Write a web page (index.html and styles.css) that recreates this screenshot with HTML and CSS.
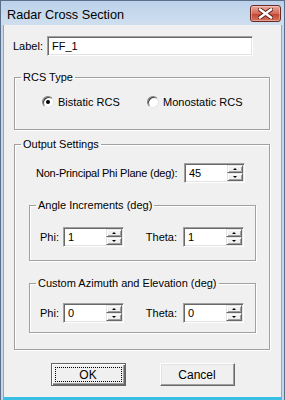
FILE: index.html
```html
<!DOCTYPE html>
<html>
<head>
  <meta charset="UTF-8">
  <title>Radar Cross Section</title>
  <link rel="stylesheet" href="styles.css">
</head>
<body>
  <div class="window">
    <div class="titlebar">
      <span class="title">Radar Cross Section</span>
      <div class="close-btn">
        <svg width="15" height="11" viewBox="0 0 15 11">
          <path d="M2 1.5 L13 9.5 M13 1.5 L2 9.5" stroke="#5c2018" stroke-width="4.2" stroke-linecap="square" fill="none"/>
          <path d="M2 1.5 L13 9.5 M13 1.5 L2 9.5" stroke="#ffffff" stroke-width="2.4" stroke-linecap="square" fill="none"/>
        </svg>
      </div>
    </div>

    <div class="client">
      <div class="label-row">
        <span>Label:</span>
        <div class="textbox">FF_1</div>
      </div>

      <fieldset class="group rcs">
        <legend>RCS Type</legend>
        <div class="radios">
          <div class="radio"><span class="radio-dot checked"></span>Bistatic RCS</div>
          <div class="radio"><span class="radio-dot"></span>Monostatic RCS</div>
        </div>
      </fieldset>

      <fieldset class="group output">
        <legend>Output Settings</legend>
        <div class="field-row">
          <span class="field-label">Non-Principal Phi Plane (deg):</span>
          <div class="spinner">
            <div class="spin-value">45</div>
            <div class="spin-btns"><div class="spin-up"></div><div class="spin-down"></div></div>
          </div>
        </div>

        <fieldset class="group inner angle">
          <legend>Angle Increments (deg)</legend>
          <div class="pair-row">
            <span class="pair-label">Phi:</span>
            <div class="spinner">
              <div class="spin-value">1</div>
              <div class="spin-btns"><div class="spin-up"></div><div class="spin-down"></div></div>
            </div>
            <span class="pair-label">Theta:</span>
            <div class="spinner">
              <div class="spin-value">1</div>
              <div class="spin-btns"><div class="spin-up"></div><div class="spin-down"></div></div>
            </div>
          </div>
        </fieldset>

        <fieldset class="group inner custom">
          <legend>Custom Azimuth and Elevation (deg)</legend>
          <div class="pair-row">
            <span class="pair-label">Phi:</span>
            <div class="spinner">
              <div class="spin-value">0</div>
              <div class="spin-btns"><div class="spin-up"></div><div class="spin-down"></div></div>
            </div>
            <span class="pair-label">Theta:</span>
            <div class="spinner">
              <div class="spin-value">0</div>
              <div class="spin-btns"><div class="spin-up"></div><div class="spin-down"></div></div>
            </div>
          </div>
        </fieldset>
      </fieldset>

      <div class="buttons">
        <div class="btn btn-default"><span class="focus">OK</span></div>
        <div class="btn">Cancel</div>
      </div>
    </div>
  </div>
</body>
</html>
```

FILE: styles.css
```css
body{margin:0;background:#ffffff;font-family:"Liberation Sans",Arial,sans-serif;font-size:11px;color:#000;}

.window{
  width:285px;
  height:400px;
  box-sizing:border-box;
  background:#c3d6ec;
  border:1px solid #5b6f88;
  border-bottom:none;
  display:flex;
  flex-direction:column;
}

.titlebar{
  height:24px;
  display:flex;
  align-items:center;
  justify-content:space-between;
  padding:0 3px 0 6px;
  background:linear-gradient(#bcd2ea, #cfdfef);
}
.title{font-size:12.7px;color:#000;margin-top:3px;}
.close-btn{
  width:29px;
  height:15px;
  align-self:flex-start;
  margin-top:4px;
  border:1px solid #6b2a22;
  border-radius:3px;
  background:linear-gradient(#e9a99c, #d46a58 50%, #c44636 55%, #d7735a);
  display:flex;
  align-items:center;
  justify-content:center;
  box-shadow:inset 0 0 0 1px rgba(255,255,255,0.35);
}

.client{
  flex:1;
  margin:0 2px 0 2px;
  background:#f0f0f0;
  border-left:1px solid #8ea6c2;
  border-right:1px solid #8ea6c2;
  border-bottom:3px solid #38bfe3;
}

.label-row{display:flex;align-items:center;gap:4px;margin:11px 0 0 9px;}
.textbox{
  width:206px;
  height:20px;
  box-sizing:border-box;
  background:#fff;
  border:1px solid;
  border-color:#a0a0a0 #ffffff #ffffff #a0a0a0;
  box-shadow:inset 1px 1px 0 #696969, inset -1px -1px 0 #e3e3e3;
  padding:0 0 0 4px;
  line-height:18px;
}

.group{
  margin:0 11px 0 10px;
  padding:0;
  border:1px solid #a0a0a0;
  box-shadow:1px 1px 0 #fff, inset 1px 1px 0 #fff;
  min-width:0;
}
.group legend{padding:0 2px;margin-left:6px;line-height:13px;}

.rcs{margin-top:15px;padding:11px 0 21px 0;}
.radios{display:flex;height:13px;align-items:center;margin-left:27px;}
.radio{display:flex;align-items:center;gap:4px;width:105px;}
.radio-dot{
  width:12px;
  height:12px;
  box-sizing:border-box;
  border-radius:50%;
  background:#fff;
  border:1px solid;
  border-color:#808080 #e8e8e8 #e8e8e8 #808080;
  box-shadow:inset 1px 1px 0 #404040;
  display:flex;
  align-items:center;
  justify-content:center;
}
.radio-dot.checked::after{content:"";width:4px;height:4px;border-radius:50%;background:#000;}

.output{margin-top:8px;padding:12px 0 16px 0;}
.field-row{display:flex;align-items:center;padding:0 24px 0 21px;}
.field-label{letter-spacing:-0.22px;}
.field-row .spinner{margin-left:auto;}

.inner{margin:0 13px 0 14px;}
.angle{margin-top:16px;padding:15px 0 13px 0;}
.custom{margin-top:16px;padding:13px 0 9px 0;}

.pair-row{display:grid;grid-template-columns:33px 61px 59px 61px;align-items:center;}
.pair-label{text-align:right;padding-right:4px;}
.pair-label:nth-of-type(2){padding-right:6px;}

.spinner{
  width:61px;
  height:20px;
  box-sizing:border-box;
  display:flex;
  background:#fff;
  border:1px solid;
  border-color:#a0a0a0 #ffffff #ffffff #a0a0a0;
  box-shadow:inset 1px 1px 0 #696969, inset -1px -1px 0 #e3e3e3;
  padding:1px;
}
.spin-value{flex:1;padding-left:3px;line-height:17px;}
.spin-btns{width:16px;display:flex;flex-direction:column;}
.spin-up,.spin-down{
  flex:1;
  background:#f0f0f0;
  box-sizing:border-box;
  border:1px solid;
  border-color:#e3e3e3 #696969 #696969 #e3e3e3;
  box-shadow:inset 1px 1px 0 #fff, inset -1px -1px 0 #a0a0a0;
  display:flex;
  align-items:center;
  justify-content:center;
}
.spin-up::after{content:"";border-left:2px solid transparent;border-right:2px solid transparent;border-bottom:2px solid #000;}
.spin-down::after{content:"";border-left:2px solid transparent;border-right:2px solid transparent;border-top:2px solid #000;}

.buttons{display:flex;justify-content:center;gap:34px;margin-top:13px;}
.btn{
  width:75px;
  height:23px;
  box-sizing:border-box;
  background:#f0f0f0;
  border:1px solid;
  border-color:#ffffff #696969 #696969 #ffffff;
  box-shadow:inset -1px -1px 0 #a0a0a0, inset 1px 1px 0 #e3e3e3;
  display:flex;
  align-items:center;
  justify-content:center;
  font-size:12px;
}
.btn-default{
  border:1px solid #646464;
  box-shadow:inset 1px 1px 0 #fff, inset -1px -1px 0 #696969, inset -2px -2px 0 #a0a0a0;
  padding:3px;
}
.focus{
  flex:1;
  align-self:stretch;
  border:1px dotted #000;
  display:flex;
  align-items:center;
  justify-content:center;
}
```
